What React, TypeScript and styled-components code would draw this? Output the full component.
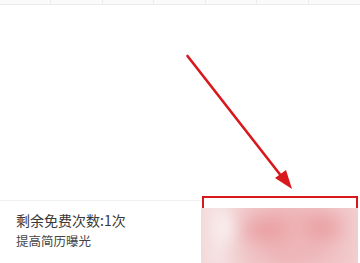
import React from "react";
import styled, { createGlobalStyle } from "styled-components";

const Global = createGlobalStyle`
  html, body { margin: 0; padding: 0; background: #ffffff; }
  body { width: 360px; height: 263px; overflow: hidden; font-family: "Noto Sans CJK SC", "Noto Sans", sans-serif; }
  #root { width: 360px; height: 263px; }
`;

const Page = styled.div`
  position: relative;
  width: 360px;
  height: 263px;
  display: flex;
  flex-direction: column;
  background: #fff;
  overflow: hidden;
`;

const TabStrip = styled.div`
  display: grid;
  grid-template-columns: repeat(7, 1fr);
  height: 4px;
  border-bottom: 1px solid #ececec;
  background: #fafafa;
`;

const TabCell = styled.div<{ $last?: boolean }>`
  border-right: ${(p) => (p.$last ? "none" : "1px solid #ebebeb")};
`;

const Body = styled.div`
  flex: 1;
`;

const Footer = styled.div`
  height: 63px;
  display: flex;
  align-items: stretch;
`;

const Info = styled.div`
  flex: 0 0 201px;
  border-top: 1px solid #f0f0f0;
  display: flex;
  flex-direction: column;
  padding: 10px 0 0 16px;
  box-sizing: border-box;
`;

const Title = styled.div`
  font-size: 14px;
  line-height: 19px;
  color: #383838;
`;

const Sub = styled.div`
  font-size: 12.5px;
  line-height: 19px;
  margin-top: 1px;
  color: #444444;
`;

const ButtonArea = styled.div`
  flex: 0 0 157px;
  position: relative;
  z-index: 2;
  margin-top: 8px;
  overflow: hidden;
  background: #f3d9da;
`;

const Blur = styled.div`
  position: absolute;
  inset: -6px;
  filter: blur(7px);
  background:
    radial-gradient(ellipse 16px 20px at 30px 26px, #fbf6f6 0%, rgba(251,246,246,0) 100%),
    radial-gradient(ellipse 34px 20px at 70px 28px, #e99a9e 0%, rgba(233,154,158,0) 100%),
    radial-gradient(ellipse 28px 20px at 128px 26px, #e99a9e 0%, rgba(233,154,158,0) 100%),
    linear-gradient(to right, #f2d3d4 0%, #f6e6e6 14%, #f0c8ca 28%, #eeb4b7 50%, #eeb7ba 70%, #f2cfd0 100%);
`;

const Highlight = styled.div`
  position: absolute;
  left: 202px;
  top: 196px;
  width: 156px;
  height: 80px;
  border: 2px solid #d8181d;
  box-sizing: border-box;
  z-index: 1;
`;

const ArrowSvg = styled.svg`
  position: absolute;
  left: 0;
  top: 0;
  z-index: 3;
  pointer-events: none;
`;

export default function App() {
  return (
    <Page>
      <Global />
      <TabStrip>
        {Array.from({ length: 7 }).map((_, i) => (
          <TabCell key={i} $last={i === 6} />
        ))}
      </TabStrip>
      <Body />
      <Footer>
        <Info>
          <Title>剩余免费次数:1次</Title>
          <Sub>提高简历曝光</Sub>
        </Info>
        <ButtonArea>
          <Blur />
        </ButtonArea>
      </Footer>
      <Highlight />
      <ArrowSvg width="360" height="263" viewBox="0 0 360 263">
        <line x1="187.5" y1="56" x2="282" y2="177" stroke="#d8181d" strokeWidth="2.6" strokeLinecap="round" />
        <polygon points="292,189 275,178 286,170" fill="#d8181d" />
      </ArrowSvg>
    </Page>
  );
}
